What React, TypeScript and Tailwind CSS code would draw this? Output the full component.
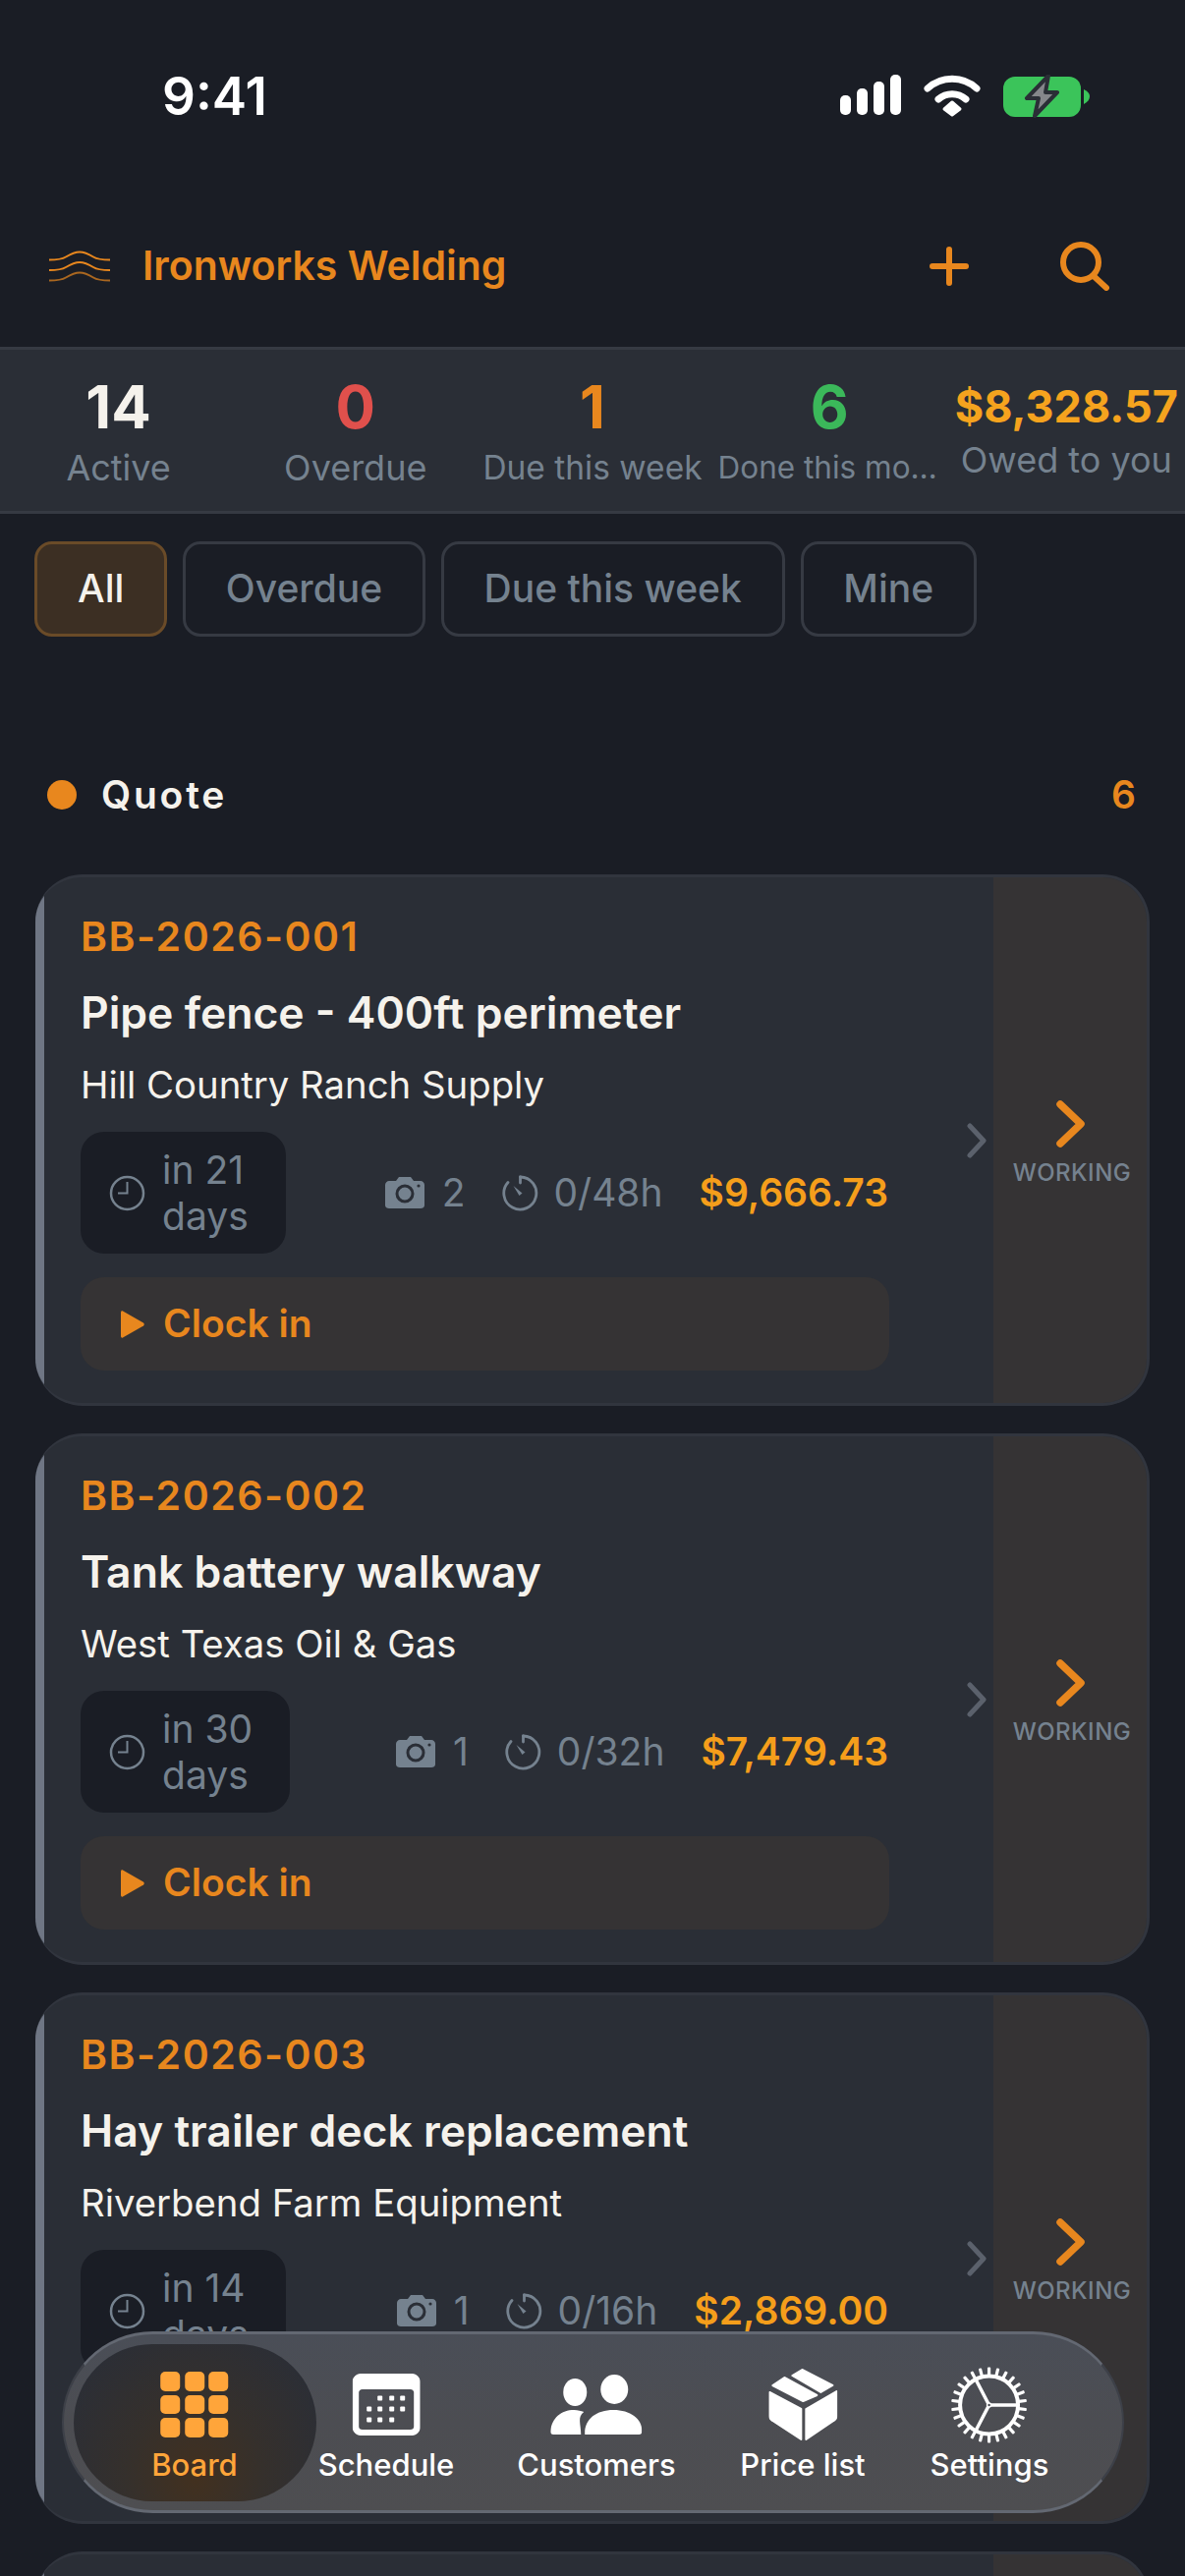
import React from "react";

const ORANGE = "#e8871e";

function Signal() {
  return (
    <svg width="62" height="41" viewBox="0 0 62 41" fill="#fff">
      <rect x="0" y="21" width="11" height="20" rx="5" />
      <rect x="17" y="14" width="11" height="27" rx="5" />
      <rect x="34" y="7" width="11" height="34" rx="5" />
      <rect x="51" y="0" width="11" height="41" rx="5" />
    </svg>
  );
}

function Wifi() {
  return (
    <svg width="58" height="43" viewBox="0 0 58 43" fill="none" stroke="#fff" strokeWidth="7" strokeLinecap="round">
      <path d="M4 14 C18 1 40 1 54 14" />
      <path d="M15 25 C23 18 35 18 43 25" />
      <path d="M21 36 L29 29 L37 36 L29 42 Z" fill="#fff" stroke="#fff" strokeWidth="3" strokeLinejoin="round" transform="translate(0 -1)" />
    </svg>
  );
}

function Battery() {
  return (
    <svg width="88" height="44" viewBox="0 0 88 44" fill="none">
      <rect x="0" y="2" width="79" height="41" rx="12" fill="#3bc45a" />
      <path d="M82 15 C86 17 88 19 88 22 C88 25 86 28 82 30 Z" fill="#3bc45a" />
      <path d="M46 1 L24 24 L36 24 L32 42 L55 18 L43 18 Z" fill="#85878b" stroke="#2a2e36" strokeWidth="4" strokeLinejoin="round" />
    </svg>
  );
}

function Logo() {
  const d = "M0 8.5 C8 8.5 13 8 17 5.5 C22 2.5 27 0.5 31 0.5 C36 0.5 41 3 45 5.5 C49 8 54 8.5 62 8.5";
  return (
    <svg width="62" height="32" viewBox="0 0 62 32" fill="none" stroke={ORANGE} strokeWidth="2">
      <path d={d} transform="translate(0 1)" />
      <path d={d} transform="translate(0 11.5)" />
      <path d={d} transform="translate(0 22)" opacity="0.7" />
    </svg>
  );
}

function PlusIcon() {
  return (
    <svg width="40" height="40" viewBox="0 0 40 40" fill="none" stroke={ORANGE} strokeWidth="6" strokeLinecap="round">
      <path d="M20 3 V37 M3 20 H37" />
    </svg>
  );
}

function SearchIcon() {
  return (
    <svg width="50" height="50" viewBox="0 0 50 50" fill="none" stroke={ORANGE} strokeWidth="6" strokeLinecap="round">
      <circle cx="21" cy="21" r="18" />
      <path d="M34 35 L47 47" />
    </svg>
  );
}

function ClockIcon() {
  return (
    <svg width="37" height="37" viewBox="0 0 37 37" fill="none" stroke="#75828f" strokeWidth="2.5">
      <circle cx="18.5" cy="18.5" r="16.5" />
      <path d="M18.5 7 V18.5 H9" strokeWidth="2" />
    </svg>
  );
}

function CameraIcon() {
  return (
    <svg width="40" height="32" viewBox="0 0 40 32">
      <path d="M4 4 H11 L14 0 H26 L29 4 H36 C38 4 40 6 40 8 V29 C40 31 38 32 36 32 H4 C2 32 0 31 0 29 V8 C0 6 2 4 4 4 Z" fill="#75828f" />
      <circle cx="20" cy="17" r="8" fill="none" stroke="#2a2e36" strokeWidth="3" />
      <circle cx="34" cy="9" r="1.6" fill="#2a2e36" />
    </svg>
  );
}

function StopwatchIcon() {
  return (
    <svg width="37" height="37" viewBox="0 0 37 37" fill="none" stroke="#75828f" strokeWidth="2.8" strokeLinecap="round">
      <path d="M18.5 2 A16.5 16.5 0 1 1 6 7.5" />
      <path d="M18.5 2 V8" />
      <path d="M17.5 21 L11.5 11 L20.5 18.5 Z" fill="#75828f" stroke="none" />
    </svg>
  );
}

function Play() {
  return (
    <svg width="25" height="28" viewBox="0 0 25 28">
      <path d="M1 2 C1 0.5 2 0 3 0.5 L24 12.5 C25 13.3 25 14.7 24 15.5 L3 27.5 C2 28 1 27.5 1 26 Z" fill={ORANGE} />
    </svg>
  );
}

function GrayChevron() {
  return (
    <svg width="20" height="36" viewBox="0 0 20 36" fill="none" stroke="#5b616c" strokeWidth="5" strokeLinecap="round" strokeLinejoin="round">
      <path d="M3 3 L17 18 L3 33" />
    </svg>
  );
}

function OrangeChevron() {
  return (
    <svg width="29" height="48" viewBox="0 0 29 48" fill="none" stroke={ORANGE} strokeWidth="7.5" strokeLinecap="round" strokeLinejoin="round">
      <path d="M4 4 L25 24 L4 44" />
    </svg>
  );
}

function BoardIcon() {
  const cells = [0, 1, 2, 3, 4, 5, 6, 7, 8];
  return (
    <div className="grid h-[67px] w-[69px] grid-cols-3 grid-rows-3 gap-x-[4.5px] gap-y-[4px]">
      {cells.map((c) => (
        <div key={c} className="rounded-[5px] bg-[#ffa53a]" />
      ))}
    </div>
  );
}

function CalendarIcon() {
  const dots = [
    [28, 25], [40, 25], [51, 25],
    [17, 36], [28, 36], [40, 36], [51, 36],
    [17, 47], [28, 47], [40, 47],
  ];
  return (
    <svg width="69" height="63" viewBox="0 0 69 63">
      <path fillRule="evenodd" fill="#fff" d="M8 0 H61 C65 0 69 4 69 8 V55 C69 59 65 63 61 63 H8 C4 63 0 59 0 55 V8 C0 4 4 0 8 0 Z M10 16 C8 16 6.5 17.5 6.5 19 V54 C6.5 56 8 57 10 57 H59 C61 57 62.5 56 62.5 54 V19 C62.5 17.5 61 16 59 16 Z" />
      {dots.map(([x, y]) => (
        <rect key={`${x}-${y}`} x={x - 2.5} y={y - 2.5} width="5" height="5" rx="1" fill="#fff" />
      ))}
    </svg>
  );
}

function PeopleIcon() {
  return (
    <svg width="93" height="61" viewBox="0 0 93 61" fill="#fff">
      <ellipse cx="65" cy="15" rx="14" ry="15" />
      <ellipse cx="25" cy="18" rx="12" ry="14" />
      <path d="M35 61 C34 46 46 36 64 36 C82 36 94 46 93 58 C93 60 92 61 90 61 Z" />
      <path d="M0 58 C1 44 11 36 24 36 C28 36 31 37 34 38 C27 43 31 50 31 61 H3 C1 61 0 60 0 58 Z" />
    </svg>
  );
}

function BoxIcon() {
  return (
    <svg width="70" height="74" viewBox="0 0 70 74" fill="#fff" stroke="#fff" strokeWidth="2" strokeLinejoin="round">
      <path d="M24 7 L34 1 L65 17 L53 24 Z" />
      <path d="M4 17 L16 9 L49 27 L35 33 Z" />
      <path d="M1 24 L33 41 V72 L4 53 C2 52 1 50 1 48 Z" />
      <path d="M69 23 L38 41 V72 L66 53 C68 52 69 50 69 48 Z" />
    </svg>
  );
}

function GearIcon() {
  const teeth = Array.from({ length: 26 }, (_, i) => i * (360 / 26));
  return (
    <svg width="78" height="78" viewBox="0 0 78 78" fill="none" stroke="#fff">
      {teeth.map((a) => (
        <rect key={a} x="37.4" y="0.5" width="3.2" height="9" rx="1" fill="#fff" stroke="none" transform={`rotate(${a} 39 39)`} />
      ))}
      <circle cx="39" cy="39" r="29.5" strokeWidth="4" />
      <path d="M39 39 L26 14 M39 39 H68 M39 39 L25 66" strokeWidth="3.5" />
      <circle cx="39" cy="39" r="2" fill="#4b4d54" strokeWidth="1.5" />
    </svg>
  );
}

const stats = [
  { value: "14", label: "Active", color: "text-[#f5f2ec]" },
  { value: "0", label: "Overdue", color: "text-[#e0504c]" },
  { value: "1", label: "Due this week", color: "text-[#e8871e]", size: "text-[33.5px]" },
  { value: "6", label: "Done this month", color: "text-[#3bb85a]", size: "text-[31.5px]" },
];

function Stat({ value, label, color, size }: { value: string; label: string; color: string; size?: string }) {
  return (
    <div className="flex w-[241.2px] flex-col items-center px-[7px]">
      <div className={`text-[60px] font-bold leading-[72px] ${color}`}>{value}</div>
      <div
        className={`mt-[4px] h-[44px] w-full truncate whitespace-nowrap text-center leading-[44px] text-[#75828f] ${
          size ?? "text-[36px]"
        }`}
      >
        {label}
      </div>
    </div>
  );
}

function Chip({ label, active, pad }: { label: string; active?: boolean; pad: string }) {
  return (
    <div
      className={`flex h-[97px] items-center rounded-[18px] border-[3px] text-[39px] font-medium ${pad} ${
        active ? "border-[#6a4b28] bg-[#3c2f23] text-[#f5f2ec]" : "border-[#363a43] text-[#75828f]"
      }`}
    >
      {label}
    </div>
  );
}

type Job = {
  id: string;
  title: string;
  customer: string;
  due: [string, string];
  photos: string;
  hours: string;
  price: string;
};

const jobs: Job[] = [
  { id: "BB-2026-001", title: "Pipe fence - 400ft perimeter", customer: "Hill Country Ranch Supply", due: ["in 21", "days"], photos: "2", hours: "0/48h", price: "$9,666.73" },
  { id: "BB-2026-002", title: "Tank battery walkway", customer: "West Texas Oil & Gas", due: ["in 30", "days"], photos: "1", hours: "0/32h", price: "$7,479.43" },
  { id: "BB-2026-003", title: "Hay trailer deck replacement", customer: "Riverbend Farm Equipment", due: ["in 14", "days"], photos: "1", hours: "0/16h", price: "$2,869.00" },
];

function JobCard({ job }: { job: Job }) {
  return (
    <div className="flex h-[541px] shrink-0 overflow-hidden rounded-[48px] border-y-[3px] border-r-[3px] border-[#31353e] bg-[#2a2e36]">
      <div className="w-[9px] shrink-0 bg-[#6f7684]" />
      <div className="box-content flex w-[823px] shrink-0 flex-col pl-[37px]">
        <div className="mt-[36px] text-[41px] font-semibold leading-[48px] tracking-[1.5px] text-[#e8871e]">{job.id}</div>
        <div className="mt-[28px] text-[44.5px] font-semibold leading-[52px] text-[#f5f2ec]">{job.title}</div>
        <div className="mt-[23px] text-[38.3px] leading-[48px] text-[#f5f2ec]">{job.customer}</div>
        <div className="mt-[24px] flex items-center justify-between">
          <div className="flex h-[124px] items-center gap-[17px] rounded-[24px] bg-[#1a1d25] pl-[29px] pr-[38px]">
            <ClockIcon />
            <div className="text-[39px] leading-[47px] text-[#75828f]">
              <div>{job.due[0]}</div>
              <div>{job.due[1]}</div>
            </div>
          </div>
          <div className="flex items-center pr-[1px] text-[39px] text-[#75828f]">
            <CameraIcon />
            <span className="ml-[18px]">{job.photos}</span>
            <span className="ml-[37px] flex"><StopwatchIcon /></span>
            <span className="ml-[16px]">{job.hours}</span>
            <span className="ml-[37px] font-semibold text-[#f59e1b]">{job.price}</span>
          </div>
        </div>
        <div className="mt-[24px] flex h-[95px] items-center gap-[19px] rounded-[24px] bg-[#353334] pl-[40px]">
          <Play />
          <span className="text-[39px] font-semibold text-[#e8871e]">Clock in</span>
        </div>
      </div>
      <div className="flex w-[106px] shrink-0 items-center justify-end pr-[7px]">
        <GrayChevron />
      </div>
      <div className="flex w-[156px] shrink-0 flex-col items-center justify-center bg-[#353334] pt-[8px]">
        <OrangeChevron />
        <div className="mt-[11px] ml-[4px] text-[24px] font-medium leading-[30px] tracking-[0.5px] text-[#75828f]">WORKING</div>
      </div>
    </div>
  );
}

function NavItem({ icon, label, x, color }: { icon: React.ReactNode; label: string; x: string; color?: string }) {
  return (
    <div className={`absolute top-0 h-full w-0 ${x}`}>
      <div className={`absolute left-0 top-0 flex h-full -translate-x-1/2 flex-col items-center text-[31px] font-medium ${color ?? "text-white"}`}>
        <div className="mt-[33px] flex h-[77px] items-center justify-center">{icon}</div>
        <div className="mt-[3px] whitespace-nowrap leading-[40px]">{label}</div>
      </div>
    </div>
  );
}

export default function App() {
  return (
    <div
      className="relative h-[2622px] w-[1206px] overflow-hidden bg-[#1a1d25] text-white"
      style={{ fontFamily: "Inter, 'Noto Sans', sans-serif" }}
    >
      <div className="flex h-[204px] items-start justify-between pl-[165px] pr-[97px] pt-[65px]">
        <div className="text-[53px] font-semibold leading-[66px]">9:41</div>
        <div className="flex items-start gap-[23px] pt-[11px]">
          <Signal />
          <Wifi />
          <Battery />
        </div>
      </div>

      <div className="flex h-[149px] items-center pb-[16px] pl-[50px] pr-[77px]">
        <Logo />
        <div className="ml-[33px] text-[41px] font-semibold text-[#e8871e]">Ironworks Welding</div>
        <div className="ml-auto flex items-center gap-[93px]">
          <PlusIcon />
          <SearchIcon />
        </div>
      </div>

      <div className="flex h-[170px] items-center border-y-[3px] border-[#363a43] bg-[#2a2e36]">
        {stats.map((s) => (
          <Stat key={s.label} {...s} />
        ))}
        <div className="flex flex-1 flex-col items-center whitespace-nowrap">
          <div className="text-[45px] font-bold leading-[56px] text-[#f5a31e]">$8,328.57</div>
          <div className="mt-[4px] text-[36px] leading-[44px] text-[#75828f]">Owed to you</div>
        </div>
      </div>

      <div className="mt-[28px] flex gap-[16px] pl-[35px]">
        <Chip label="All" active pad="px-[41px]" />
        <Chip label="Overdue" pad="px-[40.5px]" />
        <Chip label="Due this week" pad="px-[41px]" />
        <Chip label="Mine" pad="px-[40.5px]" />
      </div>

      <div className="mt-[131px] flex h-[60px] items-center pl-[48px] pr-[50px]">
        <div className="h-[30px] w-[30px] rounded-full bg-[#e8871e]" />
        <div className="ml-[25px] text-[39px] font-semibold tracking-[2.8px] text-[#f5f2ec]">Quote</div>
        <div className="ml-auto text-[39px] font-semibold text-[#e8871e]">6</div>
      </div>

      <div className="mt-[51px] flex flex-col gap-[28px] px-[36px]">
        {jobs.map((j) => (
          <JobCard key={j.id} job={j} />
        ))}
        <div className="flex h-[200px] shrink-0 overflow-hidden rounded-[48px] border-y-[3px] border-r-[3px] border-[#31353e] bg-[#2a2e36]">
          <div className="w-[9px] shrink-0 bg-[#6f7684]" />
          <div className="ml-auto w-[156px] bg-[#353334]" />
        </div>
      </div>

      <div className="absolute left-[63px] top-[2373px] h-[185px] w-[1081px] rounded-full border-y-[3px] border-x-[2px] border-y-[#636872] border-x-[#3d4048] bg-[linear-gradient(180deg,#4a4e57_0%,#4c4d52_50%,#4e4e51_100%)]">
        <div className="absolute left-[10px] top-[10px] h-[160px] w-[247px] rounded-full bg-[radial-gradient(ellipse_at_50%_85%,#42301f_0%,#35302c_40%,#2b2e36_85%)]" />
        <NavItem icon={<BoardIcon />} label="Board" x="left-[133px]" color="text-[#ffa53a]" />
        <NavItem icon={<CalendarIcon />} label="Schedule" x="left-[328px]" />
        <NavItem icon={<PeopleIcon />} label="Customers" x="left-[542px]" />
        <NavItem icon={<BoxIcon />} label="Price list" x="left-[752px]" />
        <NavItem icon={<GearIcon />} label="Settings" x="left-[942px]" />
      </div>
    </div>
  );
}
